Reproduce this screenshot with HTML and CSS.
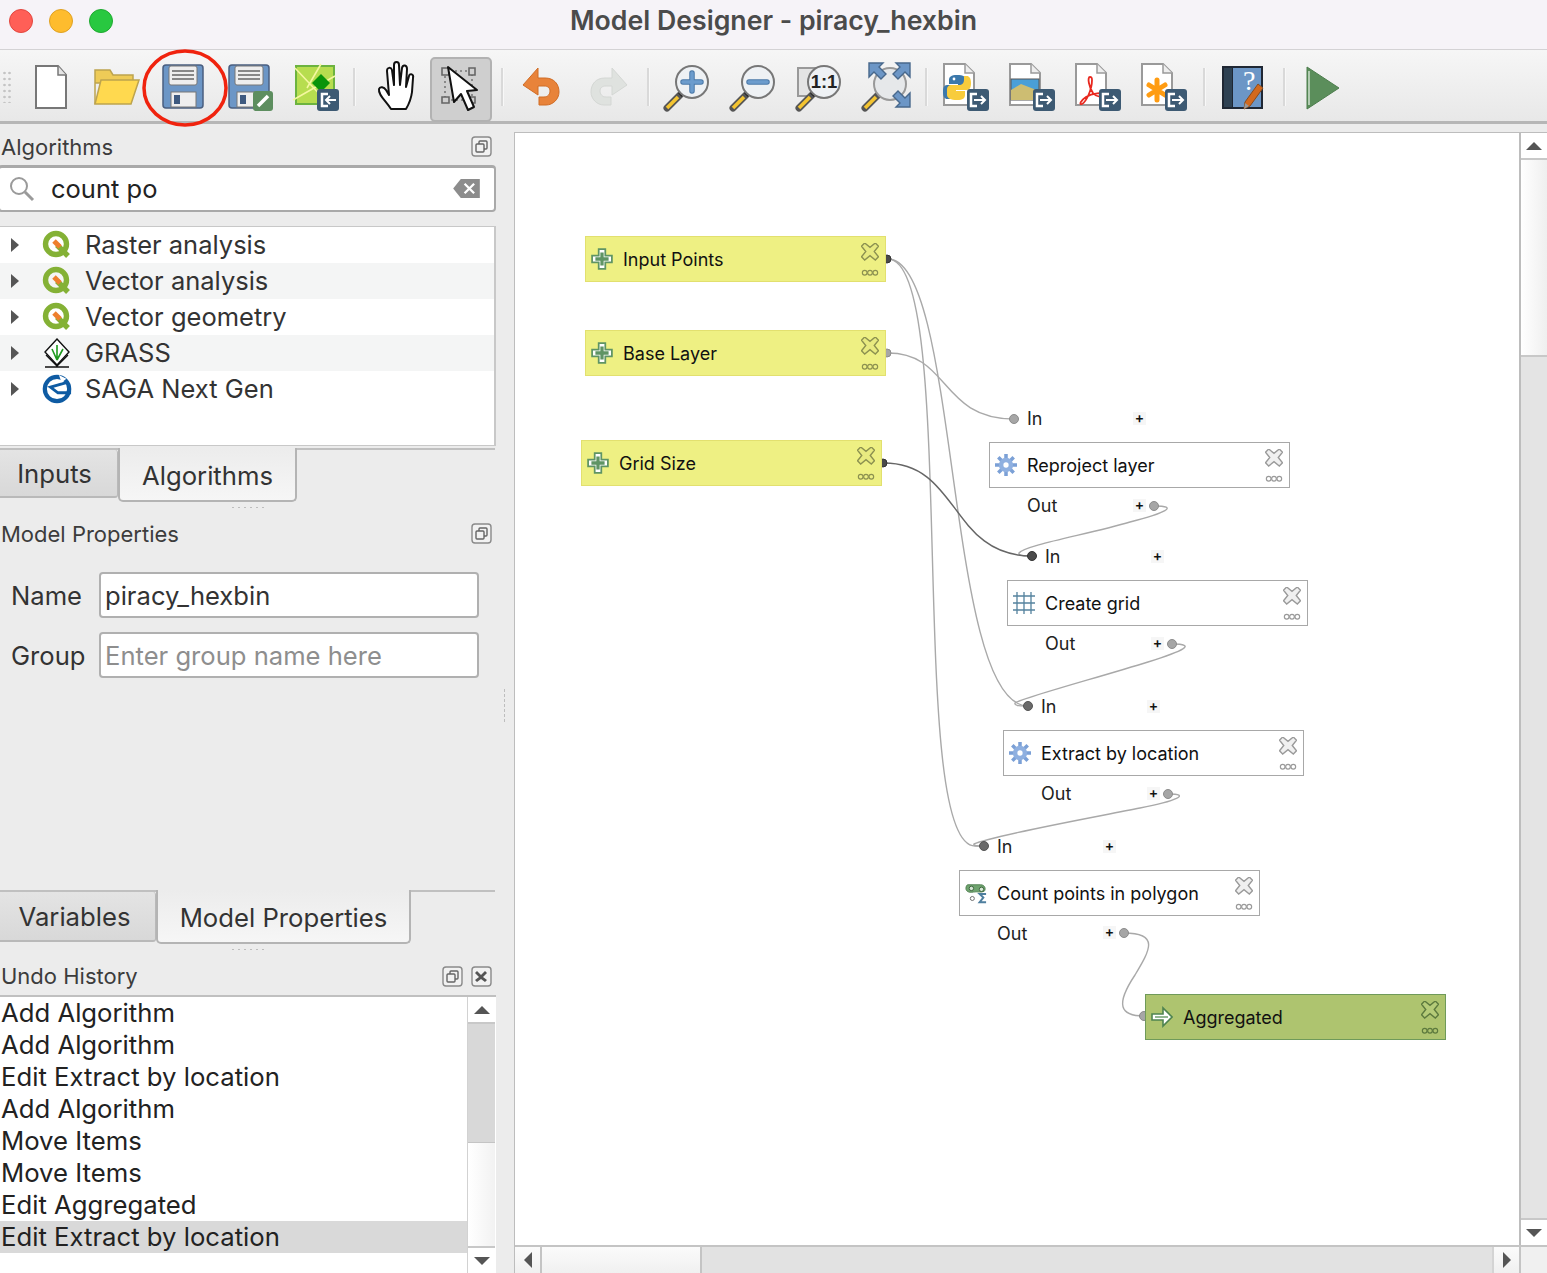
FILE: index.html
```html
<!DOCTYPE html>
<html lang="en">
<head>
  <meta charset="UTF-8">
  <title>Model Designer - piracy_hexbin</title>
  <link rel="stylesheet" href="styles.css">
</head>
<body>
  <svg class="defs" width="0" height="0">
    <defs>
      <g id="badge-in">
        <rect x="36" y="39" width="22" height="22" rx="3" fill="#3d5a73"/>
        <path d="M47 44h-6v12h6" fill="none" stroke="#fff" stroke-width="2.5"/>
        <path d="M55 50h-10M49 46l-4 4 4 4" fill="none" stroke="#fff" stroke-width="2"/>
      </g>
      <g id="badge-out">
        <rect x="34" y="39" width="22" height="22" rx="3" fill="#3d5a73"/>
        <path d="M44 44h-6v12h6" fill="none" stroke="#fff" stroke-width="2.5"/>
        <path d="M41 50h11M48 46l4 4-4 4" fill="none" stroke="#fff" stroke-width="2"/>
      </g>
      <g id="page">
        <path d="M11 14h21l9 9v32H11z" fill="#fff" stroke="#9a9a9a" stroke-width="2"/>
        <path d="M32 14v9h9" fill="#eee" stroke="#9a9a9a" stroke-width="1.5"/>
      </g>
      <g id="glass">
        <path d="M12 58l13-13" stroke="#555" stroke-width="7" stroke-linecap="round"/>
        <path d="M12 58l11-11" stroke="#f4c430" stroke-width="3.5"/>
        <path d="M25 45l2-2" stroke="#111" stroke-width="5"/>
      </g>
      <g id="float-icon">
        <rect x="1" y="1" width="19" height="19" rx="3" fill="#f2f2f2" stroke="#8a8a8a" stroke-width="1.4"/>
        <rect x="8" y="5" width="8" height="8" rx="1" fill="none" stroke="#666" stroke-width="1.4"/>
        <rect x="5" y="8" width="8" height="8" rx="1" fill="#f2f2f2" stroke="#666" stroke-width="1.4"/>
      </g>
      <g id="q-logo">
        <circle cx="14" cy="14" r="10.5" fill="none" stroke="#84b135" stroke-width="5.4"/>
        <path d="M15 15l11 11" stroke="#84b135" stroke-width="5.4"/>
        <path d="M12 11l6 6" stroke="#ee7f2d" stroke-width="5"/>
      </g>
      <g id="node-tools">
        <path d="M3 0l5 4 5-4 3 3-4 5 4 5-3 3-5-4-5 4-3-3 4-5-4-5z" fill="var(--tool-fill)" stroke="var(--tool-line)" stroke-width="1.3"/>
        <circle cx="3" cy="28" r="2.2" fill="none" stroke="var(--tool-line)" stroke-width="1.1"/>
        <circle cx="8" cy="28" r="2.2" fill="none" stroke="var(--tool-line)" stroke-width="1.1"/>
        <circle cx="13" cy="28" r="2.2" fill="none" stroke="var(--tool-line)" stroke-width="1.1"/>
      </g>
      <g id="plus-icon">
        <path d="M7 1h6v6h6v6h-6v6H7v-6H1V7h6z" fill="#fff" stroke="#5f9464" stroke-width="1.6"/>
        <path d="M10 4v12M4 10h12" stroke="#5f9464" stroke-width="3"/>
      </g>
      <g id="gear-icon">
        <path d="M10 0v20M0 10h20M3 3l14 14M17 3L3 17" stroke="#7ba0d6" stroke-width="3.2"/>
        <circle cx="10" cy="10" r="6.5" fill="#8fb0e0"/>
        <circle cx="10" cy="10" r="2.4" fill="#fff"/>
      </g>
      <g id="python-half">
        <path d="M24 25c-6 0-8 2-8 5v4h9v1H14c-3 0-4 3-4 7 0 5 2 7 4 7h3v-4c0-3 2-5 5-5h8c2 0 4-2 4-4v-6c0-3-4-5-10-5z"/>
      </g>
    </defs>
  </svg>

  <div class="titlebar">
    <div class="lights">
      <span class="light light-red"></span>
      <span class="light light-amber"></span>
      <span class="light light-green"></span>
    </div>
    <div class="title">Model Designer - piracy_hexbin</div>
  </div>

  <div class="toolbar">
    <div class="grip"></div>
    <div class="tool"><svg viewBox="0 0 66 72"><path d="M19 16h22l8 9v33H19z" fill="#fff" stroke="#777" stroke-width="2"/><path d="M41 16v9h8" fill="#e4e4e4" stroke="#777" stroke-width="1.5"/></svg></div>
    <div class="tool"><svg viewBox="0 0 66 72"><path d="M12 54V20h15l3 5h20v8H12z" fill="#eecb57" stroke="#bda44e" stroke-width="1.5"/><path d="M18 30h38l-8 24H12z" fill="#ffd94f" stroke="#bda44e" stroke-width="1.5"/></svg></div>
    <div class="tool"><svg viewBox="0 0 66 72"><rect x="14" y="15" width="40" height="43" rx="3" fill="#6c96c6" stroke="#4a5f80" stroke-width="1.5"/><rect x="20" y="16" width="28" height="19" rx="2" fill="#eee" stroke="#777"/><path d="M23 21h22M23 25h22M23 29h22" stroke="#666" stroke-width="1.5"/><rect x="22" y="42" width="25" height="15" fill="#eee" stroke="#777"/><rect x="25" y="45" width="6" height="9" fill="#3e5a80"/></svg></div>
    <div class="tool"><svg viewBox="0 0 66 72"><rect x="14" y="15" width="40" height="43" rx="3" fill="#6c96c6" stroke="#4a5f80" stroke-width="1.5"/><rect x="20" y="16" width="28" height="19" rx="2" fill="#eee" stroke="#777"/><path d="M23 21h22M23 25h22M23 29h22" stroke="#666" stroke-width="1.5"/><rect x="22" y="42" width="25" height="15" fill="#eee" stroke="#777"/><rect x="25" y="45" width="6" height="9" fill="#3e5a80"/><rect x="38" y="41" width="20" height="20" rx="3" fill="#5d8e5f"/><path d="M43 56l10-10" stroke="#fff" stroke-width="3.5"/></svg></div>
    <div class="tool"><svg viewBox="0 0 66 72"><rect x="15" y="16" width="38" height="38" fill="#b7dd4f" stroke="#6cb33f" stroke-width="2"/><path d="M14 18l30 32M12 50l42-24M40 14L26 38" stroke="#f4f7a0" stroke-width="1.6" fill="none"/><path d="M40 24l9 9-9 9-9-9z" fill="#0a940a"/><use href="#badge-in"/></svg></div>
    <div class="tool-sep tool-sep-first"></div>
    <div class="tool"><svg viewBox="0 0 66 72"><path d="M28 59C23 51 15 45 16 39c1-3 5-2 7 1l3 5-2-24c0-4 4-4 5-1l2 15 0-20c0-4 5-4 5 0l1 20 2-17c1-4 5-3 5 1l-1 18 3-11c1-3 5-2 4 2l-1 14c-1 8-3 12-6 17z" fill="#fff" stroke="#111" stroke-width="2" stroke-linejoin="round"/></svg></div>
    <div class="tool tool-active"><svg viewBox="-2 0 66 72"><rect x="14" y="21" width="27" height="29" fill="none" stroke="#777" stroke-width="1.6" stroke-dasharray="2 3"/><path d="M11 18h7v7h-7zM38 18h6v7h-6zM11 47h7v6h-7zM38 47h6v6h-6z" fill="#cfcfcf" stroke="#666" stroke-width="1.6"/><path d="M17 17L23 52L30 44L37 60L43 57L36 41L46 40z" fill="#fff" stroke="#111" stroke-width="2" stroke-linejoin="round"/></svg></div>
    <div class="tool-sep"></div>
    <div class="tool"><svg viewBox="0 0 66 72"><path d="M14 35l15-17v10h7c9 0 14 6 14 14 0 7-6 13-13 13h-7v-8h5c4 0 6-3 6-6s-2-5-6-5h-6v9z" fill="#e8833a" stroke="#d06c25" stroke-width="1"/></svg></div>
    <div class="tool"><svg viewBox="0 0 66 72"><path d="M52 35L37 18v10h-7c-9 0-14 6-14 14 0 7 6 13 13 13h7v-8h-5c-4 0-6-3-6-6s2-5 6-5h6v9z" fill="#dfe2df" stroke="#d4d7d4" stroke-width="1"/></svg></div>
    <div class="tool-sep"></div>
    <div class="tool"><svg viewBox="0 0 66 72"><use href="#glass"/><circle cx="37" cy="32" r="16" fill="#eef1f4" stroke="#777" stroke-width="2"/><path d="M37 23v18M28 32h18" stroke="#4a78a8" stroke-width="5.5" stroke-linecap="round"/><path d="M37 23v18M28 32h18" stroke="#6c9ccd" stroke-width="3.5" stroke-linecap="round"/></svg></div>
    <div class="tool"><svg viewBox="0 0 66 72"><use href="#glass"/><circle cx="37" cy="32" r="16" fill="#eef1f4" stroke="#777" stroke-width="2"/><path d="M28 32h18" stroke="#4a78a8" stroke-width="5.5" stroke-linecap="round"/><path d="M28 32h18" stroke="#6c9ccd" stroke-width="3.5" stroke-linecap="round"/></svg></div>
    <div class="tool"><svg viewBox="0 0 66 72"><rect x="11" y="18" width="26" height="28" fill="#e4e4e4" stroke="#999" stroke-width="2"/><use href="#glass"/><circle cx="37" cy="32" r="16" fill="#eef1f4" stroke="#777" stroke-width="2"/><text class="one-one" x="37" y="38">1:1</text></svg></div>
    <div class="tool"><svg viewBox="0 0 66 72"><use href="#glass"/><circle cx="37" cy="34" r="16" fill="#e6e8ea" stroke="#999" stroke-width="2"/><path d="M16 13h14l-4 4 7 7-5 5-7-7-5 5zM57 13H43l4 4-7 7 5 5 7-7 5 5zM57 57H43l4-4-7-7 5-5 7 7 5-5z" fill="#6c96c6" stroke="#48688c" stroke-width="1.4"/></svg></div>
    <div class="tool-sep"></div>
    <div class="tool"><svg viewBox="0 0 66 72"><use href="#page"/><use href="#python-half" fill="#3b78ab"/><use href="#python-half" fill="#f8cc3c" transform="rotate(180 24 37.5)"/><circle cx="21" cy="29" r="1.4" fill="#fff"/><use href="#badge-out"/></svg></div>
    <div class="tool"><svg viewBox="0 0 66 72"><use href="#page"/><rect x="12" y="29" width="28" height="21" fill="#4a9fd8" stroke="#555"/><path d="M12 50V40l10-6 18 7v9z" fill="#cdbd72"/><use href="#badge-out"/></svg></div>
    <div class="tool"><svg viewBox="0 0 66 72"><use href="#page"/><path d="M25 27c-3 0-1 10 3 16 3 4 11 5 11 2s-12-2-18 2c-6 4-7 8-4 7 4-2 10-14 10-24 0-2 0-3-2-3z" fill="none" stroke="#e8281f" stroke-width="1.8"/><use href="#badge-out"/></svg></div>
    <div class="tool"><svg viewBox="0 0 66 72"><use href="#page"/><path d="M26 30v20M18 35l16 10M18 45l16-10" stroke="#ff9c12" stroke-width="5" stroke-linecap="round"/><use href="#badge-out"/></svg></div>
    <div class="tool-sep"></div>
    <div class="tool"><svg viewBox="0 0 66 72"><rect x="11" y="16" width="41" height="43" fill="#1f2733"/><rect x="13" y="18" width="8" height="39" fill="#2e4152"/><rect x="22" y="18" width="28" height="39" fill="#6c96c6"/><text class="help-mark" x="32" y="40">?</text><path d="M47 34l5 4-13 18-6 3 1-7z" fill="#d2691e" stroke="#8a4b1c" stroke-width="1"/><path d="M33 59l1-6 4 3z" fill="#999"/></svg></div>
    <div class="tool-sep"></div>
    <div class="tool"><svg viewBox="0 0 66 72"><path d="M16 17l32 21-32 21z" fill="#5b8e5b" stroke="#4d7d4d"/><path d="M18 21v34" stroke="#cfe0cf" stroke-width="1.5"/></svg></div>
  </div>

  <svg class="callout" width="90" height="82" viewBox="0 0 90 82">
    <ellipse cx="45" cy="41" rx="41" ry="37" fill="none" stroke="#f0230e" stroke-width="3.5"/>
  </svg>

  <div class="main">
    <div class="sidebar">
      <div class="dock-title">
        <span>Algorithms</span>
        <svg class="dock-btn" viewBox="0 0 21 21"><use href="#float-icon"/></svg>
      </div>
      <div class="search">
        <svg class="search-icon" viewBox="0 0 26 26"><circle cx="10" cy="10" r="8" fill="none" stroke="#9a9a9a" stroke-width="2"/><path d="M16 16l8 8" stroke="#9a9a9a" stroke-width="3"/></svg>
        <span class="search-text">count po</span>
        <svg class="search-clear" viewBox="0 0 28 21"><path d="M8 0h20v20H8L0 10z" fill="#8c8c8c"/><path d="M12 5l10 10M22 5L12 15" stroke="#fff" stroke-width="2.4"/></svg>
      </div>
      <div class="tree">
        <div class="tree-row"><span class="caret"></span><svg class="tree-icon" viewBox="0 0 30 30"><use href="#q-logo"/></svg>Raster analysis</div>
        <div class="tree-row alt"><span class="caret"></span><svg class="tree-icon" viewBox="0 0 30 30"><use href="#q-logo"/></svg>Vector analysis</div>
        <div class="tree-row"><span class="caret"></span><svg class="tree-icon" viewBox="0 0 30 30"><use href="#q-logo"/></svg>Vector geometry</div>
        <div class="tree-row alt"><span class="caret"></span><svg class="tree-icon" viewBox="0 0 30 30"><path d="M15 1l12 13-12 13L3 14z" fill="#fff" stroke="#111" stroke-width="1.4"/><path d="M15 22V7M15 22l-5-11M15 22l6-11" stroke="#1f9a1f" stroke-width="1.6"/><path d="M4 17l11 11 11-11M3 29h24" fill="none" stroke="#111" stroke-width="1.3"/></svg>GRASS</div>
        <div class="tree-row"><span class="caret"></span><svg class="tree-icon" viewBox="0 0 32 32"><circle cx="16" cy="16" r="13" fill="none" stroke="#0e5ba3" stroke-width="4.5"/><path d="M27 9L9 14l8 6h14" fill="none" stroke="#0e5ba3" stroke-width="3"/><path d="M18 1l8 4-5 4z" fill="#fff"/></svg>SAGA Next Gen</div>
      </div>
      <div class="tabs tabs-top">
        <div class="tab tab-inputs">Inputs</div>
        <div class="tab tab-on tab-algos">Algorithms</div>
      </div>
      <div class="dots"></div>
      <div class="dock-title">
        <span>Model Properties</span>
        <svg class="dock-btn" viewBox="0 0 21 21"><use href="#float-icon"/></svg>
      </div>
      <div class="form">
        <div class="form-row"><label>Name</label><div class="field">piracy_hexbin</div></div>
        <div class="form-row"><label>Group</label><div class="field field-empty">Enter group name here</div></div>
      </div>
      <div class="tabs tabs-mid">
        <div class="tab tab-vars">Variables</div>
        <div class="tab tab-on tab-props">Model Properties</div>
      </div>
      <div class="dots"></div>
      <div class="dock-title title-undo">
        <span>Undo History</span>
        <svg class="dock-btn" viewBox="0 0 21 21"><use href="#float-icon"/></svg>
        <svg class="dock-btn" viewBox="0 0 21 21"><rect x="1" y="1" width="19" height="19" rx="3" fill="#f2f2f2" stroke="#8a8a8a" stroke-width="1.4"/><path d="M6 5l4 4 4-4 2 2-4 4 4 3-2 2-4-3-4 3-2-2 4-3-4-4z" fill="#555"/></svg>
      </div>
      <div class="history">
        <div class="history-list">
          <div class="history-row">Add Algorithm</div>
          <div class="history-row">Add Algorithm</div>
          <div class="history-row">Edit Extract by location</div>
          <div class="history-row">Add Algorithm</div>
          <div class="history-row">Move Items</div>
          <div class="history-row">Move Items</div>
          <div class="history-row">Edit Aggregated</div>
          <div class="history-row selected">Edit Extract by location</div>
        </div>
        <div class="vbar vbar-history">
          <div class="arrow-btn"><span class="tri tri-up"></span></div>
          <div class="vthumb"></div>
          <div class="vrest"></div>
          <div class="arrow-btn arrow-end"><span class="tri tri-down"></span></div>
        </div>
      </div>
    </div>

    <div class="vgrip"></div>

    <div class="canvas-wrap">
      <div class="canvas-row">
        <div class="canvas">
          <svg class="wires" viewBox="514 132 1005 1113">
            <g fill="none" stroke="#a9a9a9" stroke-width="1.4">
              <path d="M888 259C960 259 905 846 975 846L984 846"/>
              <path d="M888 259C960 259 945 706 1028 706"/>
              <path d="M888 353C950 353 940 419 1014 419"/>
              <path d="M1154 506C1180 506 1165 513 1130 522C1090 534 1025 545 1019 553C1018 556 1026 556 1032 556"/>
              <path d="M1172 644C1198 644 1183 651 1148 662C1100 677 1022 698 1015 703C1014 706 1022 706 1028 706"/>
              <path d="M1168 794C1192 794 1176 801 1140 808C1090 818 990 836 974 844C973 846 978 846 984 846"/>
              <path d="M1124 933C1160 933 1150 950 1135 975C1115 1005 1120 1016 1144 1016"/>
            </g>
            <path d="M884 463C960 463 950 556 1032 556" fill="none" stroke="#666" stroke-width="1.5"/>
            <g class="port">
              <circle cx="1014" cy="419" r="4.5"/><circle cx="1154" cy="506" r="4.5"/><circle cx="1172" cy="644" r="4.5"/>
              <circle cx="1168" cy="794" r="4.5"/><circle cx="1124" cy="933" r="4.5"/><circle cx="1144" cy="1016" r="4.5"/>
              <circle cx="887" cy="353" r="4"/>
            </g>
            <g class="port port-dark">
              <circle cx="887" cy="259" r="4"/><circle cx="883" cy="463" r="4"/>
              <circle cx="1032" cy="556" r="4.5"/>
            </g>
            <g class="port port-mid">
              <circle cx="1028" cy="706" r="4.5"/><circle cx="984" cy="846" r="4.5"/>
            </g>
          </svg>

          <div class="node node-input node-a">
            <svg class="node-icon" viewBox="0 0 20 20"><use href="#plus-icon"/></svg><span>Input Points</span>
            <svg class="node-tools" viewBox="0 0 16 32"><use href="#node-tools"/></svg>
          </div>
          <div class="node node-input node-b">
            <svg class="node-icon" viewBox="0 0 20 20"><use href="#plus-icon"/></svg><span>Base Layer</span>
            <svg class="node-tools" viewBox="0 0 16 32"><use href="#node-tools"/></svg>
          </div>
          <div class="node node-input node-c">
            <svg class="node-icon" viewBox="0 0 20 20"><use href="#plus-icon"/></svg><span>Grid Size</span>
            <svg class="node-tools" viewBox="0 0 16 32"><use href="#node-tools"/></svg>
          </div>

          <div class="node node-d">
            <svg class="node-icon" viewBox="0 0 20 20"><use href="#gear-icon"/></svg><span>Reproject layer</span>
            <svg class="node-tools" viewBox="0 0 16 32"><use href="#node-tools"/></svg>
          </div>
          <div class="node node-e">
            <svg class="node-icon" viewBox="0 0 22 22"><path d="M4 0v22M11 0v22M18 0v22M0 4h22M0 11h22M0 18h22" fill="none" stroke="#55839e" stroke-width="1.3"/></svg><span>Create grid</span>
            <svg class="node-tools" viewBox="0 0 16 32"><use href="#node-tools"/></svg>
          </div>
          <div class="node node-f">
            <svg class="node-icon" viewBox="0 0 20 20"><use href="#gear-icon"/></svg><span>Extract by location</span>
            <svg class="node-tools" viewBox="0 0 16 32"><use href="#node-tools"/></svg>
          </div>
          <div class="node node-g">
            <svg class="node-icon" viewBox="0 0 24 22"><path d="M3 2h14c5 0 6 5 4 7-3 2-8 0-12 1-5 1-8-1-8-4 0-2 1-4 2-4z" fill="#6ea36e" stroke="#4f7f4f"/><circle cx="7" cy="6" r="2.4" fill="#d8e8d8" stroke="#3a5f3a"/><circle cx="18" cy="7" r="2.4" fill="#d8e8d8" stroke="#3a5f3a"/><circle cx="8" cy="17" r="2.2" fill="#fff" stroke="#666"/><path d="M23 12h-7l4 4-4 5h7" fill="none" stroke="#4f7f9f" stroke-width="2.2"/></svg><span>Count points in polygon</span>
            <svg class="node-tools" viewBox="0 0 16 32"><use href="#node-tools"/></svg>
          </div>
          <div class="node node-output node-h">
            <svg class="node-icon" viewBox="0 0 22 20"><path d="M1 7h11V1l9 9-9 9v-6H1z" fill="#fff" stroke="#4f8450" stroke-width="1.6"/><path d="M4 10h13" stroke="#6f9f6f" stroke-width="1.5"/></svg><span>Aggregated</span>
            <svg class="node-tools" viewBox="0 0 16 32"><use href="#node-tools"/></svg>
          </div>

          <div class="pin pin-label in-d">In</div>
          <div class="pin pin-plus plus-in-d">+</div>
          <div class="pin pin-label out-d">Out</div>
          <div class="pin pin-plus plus-out-d">+</div>
          <div class="pin pin-label in-e">In</div>
          <div class="pin pin-plus plus-in-e">+</div>
          <div class="pin pin-label out-e">Out</div>
          <div class="pin pin-plus plus-out-e">+</div>
          <div class="pin pin-label in-f">In</div>
          <div class="pin pin-plus plus-in-f">+</div>
          <div class="pin pin-label out-f">Out</div>
          <div class="pin pin-plus plus-out-f">+</div>
          <div class="pin pin-label in-g">In</div>
          <div class="pin pin-plus plus-in-g">+</div>
          <div class="pin pin-label out-g">Out</div>
          <div class="pin pin-plus plus-out-g">+</div>
        </div>
        <div class="vbar vbar-canvas">
          <div class="arrow-btn"><span class="tri tri-up"></span></div>
          <div class="vthumb"></div>
          <div class="vrest"></div>
          <div class="arrow-btn arrow-end"><span class="tri tri-down"></span></div>
        </div>
      </div>
      <div class="hbar">
        <div class="harrow"><span class="tri tri-left"></span></div>
        <div class="hthumb"></div>
        <div class="hrest"></div>
        <div class="harrow harrow-end"><span class="tri tri-right"></span></div>
        <div class="hcorner"></div>
      </div>
    </div>
  </div>
</body>
</html>
```

FILE: styles.css
```css
:root {
  --panel: #ececec;
  --line: #b4b4b4;
  --text: #2b2b2b;
}
* { box-sizing: border-box; }
html, body { height: 100%; }
body {
  margin: 0;
  height: 1273px;
  overflow: hidden;
  background: var(--panel);
  color: var(--text);
  font-family: Inter, "Noto Sans", sans-serif;
  position: relative;
}
.defs { position: absolute; }

.titlebar {
  height: 50px;
  background: #f6f3f8;
  border-bottom: 1px solid #d4d2d5;
  display: flex;
  align-items: center;
  position: relative;
}
.lights {
  display: flex;
  gap: 16px;
  padding-left: 9px;
  margin-top: -8px;
}
.light {
  width: 24px;
  height: 24px;
  border-radius: 50%;
}
.light-red { background: #ff5f57; border: 1px solid #e2463f; }
.light-amber { background: #febc2e; border: 1px solid #dfa123; }
.light-green { background: #28c840; border: 1px solid #1fa930; }
.title {
  flex: 1;
  text-align: center;
  font-size: 26.7px;
  font-weight: 600;
  color: #4b4b4b;
  margin-left: -113px;
  margin-top: -9px;
}

.toolbar {
  height: 74px;
  display: flex;
  background: linear-gradient(#f6f6f6, #e8e8e8);
  border-bottom: 3px solid #b6b6b6;
}
.grip {
  width: 17px;
  margin: 20px 0 18px;
  padding-left: 2px;
  background-image: radial-gradient(#c4c4c4 1px, transparent 1.3px);
  background-size: 5px 6px;
  background-origin: content-box;
  background-clip: content-box;
  border-right: 6px solid transparent;
}
.tool {
  width: 66px;
  height: 72px;
}
.tool svg { display: block; width: 66px; height: 72px; overflow: visible; }
.tool-active { position: relative; }
.tool-active::before {
  content: "";
  position: absolute;
  left: 1px;
  right: 3px;
  top: 7px;
  height: 61px;
  background: #cfcfcf;
  border: 2px solid #b2b2b2;
  border-radius: 5px;
}
.tool-active svg { position: relative; }
.tool-sep {
  width: 14px;
  position: relative;
}
.tool-sep-first { width: 16px; }
.tool-sep::after {
  content: "";
  position: absolute;
  left: 6px;
  top: 18px;
  height: 38px;
  width: 2px;
  background: #d9d9d9;
  box-shadow: 1px 0 0 #f8f8f8;
}
.one-one {
  font-family: "Liberation Sans", sans-serif;
  font-size: 18.5px;
  font-weight: 700;
  fill: #222;
  text-anchor: middle;
}
.help-mark {
  font-family: "Liberation Serif", serif;
  font-size: 28px;
  fill: #fff;
}
.callout {
  position: absolute;
  left: 140px;
  top: 47px;
}

.main {
  display: flex;
  height: 1149px;
}
.sidebar {
  width: 496px;
  flex: none;
}
.dock-title {
  height: 41px;
  padding: 4px 4px 0 1px;
  display: flex;
  align-items: center;
  gap: 8px;
  font-size: 22px;
  color: #3c3c3c;
}
.dock-title span { flex: 1; }
.dock-btn { width: 21px; height: 21px; flex: none; }
.search {
  height: 47px;
  margin-left: -2px;
  background: #fff;
  border: 2px solid #a9a9a9;
  border-top-width: 3px;
  border-radius: 4px;
  display: flex;
  align-items: center;
  padding: 0 14px 0 9px;
}
.search-icon { width: 26px; height: 26px; }
.search-text {
  flex: 1;
  font-size: 25.5px;
  color: #222;
  padding: 0 0 2px 16px;
}
.search-clear { width: 27px; height: 20px; }
.tree {
  margin-top: 14px;
  height: 220px;
  background: #fff;
  border: 1px solid #c8c8c8;
  border-left: 0;
  border-right-width: 2px;
}
.tree-row {
  height: 36px;
  padding-bottom: 2px;
  display: flex;
  align-items: center;
  font-size: 25.5px;
  color: #333;
}
.tree-row.alt { background: #f4f5f5; }
.caret {
  width: 0;
  height: 0;
  margin: 2px 0 0 11px;
  border-left: 8px solid #555;
  border-top: 7.5px solid transparent;
  border-bottom: 7.5px solid transparent;
}
.tree-icon {
  width: 30px;
  height: 30px;
  margin: 2px 13px 0 23px;
  flex: none;
}

.tabs {
  display: flex;
  border-top: 2px solid #c0c0c0;
  align-items: flex-start;
  font-size: 25.7px;
}
.tab {
  text-align: center;
  color: #333;
}
.tab-inputs, .tab-vars {
  background: linear-gradient(#e4e4e4, #d8d8d8);
  border-right: 1px solid #b9b9b9;
  border-bottom: 2px solid #b9b9b9;
  border-radius: 0 3px 3px 0;
  height: 48px;
  line-height: 48px;
  padding-right: 8px;
}
.tab-on {
  background: linear-gradient(#ececec, #f6f6f6);
  border: 2px solid #b4b4b4;
  border-top: 0;
  border-radius: 0 0 5px 5px;
  line-height: 52px;
  margin-top: -2px;
  padding-top: 2px;
  height: 54px;
}
.tabs-top { margin-top: 2px; width: 495px; height: 50px; }
.tab-inputs { width: 118px; }
.tab-algos { width: 179px; }
.tabs-mid { width: 495px; height: 50px; }
.tab-vars { width: 156px; height: 50px; line-height: 50px; padding-right: 6px; }
.tab-props { width: 255px; }
.dots {
  height: 10px;
  margin-top: 3px;
  background-image: radial-gradient(#bdbdbd 0.8px, transparent 1px);
  background-size: 6px 3px;
  background-repeat: repeat-x;
  background-position: 230px 5px;
  background-clip: content-box;
  padding: 0 232px 0 230px;
}
.form {
  height: 338px;
  padding-top: 20px;
  display: flex;
  flex-direction: column;
  gap: 14px;
}
.form-row {
  display: flex;
  align-items: center;
  font-size: 25.6px;
  color: #333;
}
.form-row label { width: 99px; padding-left: 11px; }
.field {
  width: 380px;
  height: 46px;
  line-height: 43px;
  background: #fff;
  border: 2px solid #b0b0b0;
  border-radius: 4px;
  padding-left: 4px;
  color: #333;
}
.field-empty { color: #8e8e8e; }
.title-undo { height: 38px; padding-top: 0; margin-top: 4px; }
.history {
  height: 278px;
  display: flex;
  background: #fff;
  border-top: 2px solid #c0c0c0;
  overflow: hidden;
}
.history-list { width: 467px; flex: none; padding-top: 0; }
.history-row {
  height: 32px;
  line-height: 32px;
  font-size: 25.7px;
  padding-left: 1px;
  color: #222;
  white-space: nowrap;
}
.history-row.selected { background: #d9d9d9; }

.vbar {
  width: 28px;
  display: flex;
  flex-direction: column;
  background: #fff;
  border-left: 1px solid #d2d2d2;
}
.arrow-btn {
  height: 27px;
  display: flex;
  align-items: center;
  justify-content: center;
  background: #fff;
  border-bottom: 2px solid #c8c8c8;
  flex: none;
}
.arrow-end { border-bottom: 0; border-top: 2px solid #c8c8c8; }
.vthumb { background: #d8d8d8; border-bottom: 1px solid #c4c4c4; }
.vbar-history .vthumb { height: 119px; }
.vrest { flex: 1; background: linear-gradient(90deg, #fff, #f2f2f2); }
.vbar-canvas {
  border-left: 2px solid #bdbdbd;
}
.vbar-canvas .vthumb {
  height: 197px;
  background: linear-gradient(90deg, #fff, #efefef);
  border-bottom: 2px solid #c8c8c8;
}
.vbar-canvas .vrest { background: #e4e4e4; }
.tri { width: 0; height: 0; display: block; }
.tri-up { border: 8px solid transparent; border-top: 0; border-bottom: 8px solid #555; }
.tri-down { border: 8px solid transparent; border-bottom: 0; border-top: 8px solid #555; }
.tri-left { border: 8px solid transparent; border-left: 0; border-right: 8px solid #555; }
.tri-right { border: 8px solid transparent; border-right: 0; border-left: 8px solid #555; }

.vgrip {
  width: 18px;
  flex: none;
  margin: 564px 0 551px;
  background-image: radial-gradient(#bdbdbd 0.8px, transparent 1px);
  background-size: 3px 5px;
  background-repeat: repeat-y;
  background-position: 7px 0;
}
.canvas-wrap {
  flex: 1;
  margin-top: 8px;
  display: flex;
  flex-direction: column;
  border: 1px solid #bdbdbd;
  border-right: 0;
  border-bottom: 0;
  min-width: 0;
}
.canvas-row {
  flex: 1;
  display: flex;
  min-height: 0;
}
.canvas {
  flex: 1;
  position: relative;
  background: #fff;
  overflow: hidden;
}
.wires {
  position: absolute;
  left: -1px;
  top: -1px;
  width: 1005px;
  height: 1113px;
}
.port circle { fill: #a6a6a6; stroke: #8c8c8c; stroke-width: 1; }
.port-dark circle { fill: #4a4a4a; stroke: #333; }
.port-mid circle { fill: #6a6a6a; stroke: #555; }

.node {
  position: absolute;
  width: 301px;
  height: 46px;
  background: #fff;
  border: 1px solid #a8a8a8;
  display: flex;
  align-items: center;
  font-size: 18px;
  color: #111;
  --tool-fill: #f0f0f0;
  --tool-line: #9a9a9a;
}
.node-icon {
  width: 22px;
  height: 22px;
  margin: 0 10px 0 5px;
  flex: none;
}
.node-tools {
  position: absolute;
  right: 6px;
  top: 6px;
  width: 18px;
  height: 34px;
}
.node-input {
  background: #eef083;
  border-color: #e2e06f;
  --tool-fill: #e8ea80;
  --tool-line: #8c9150;
}
.node-output {
  background: #aec46f;
  border-color: #6f9a5a;
  --tool-fill: #b5cb78;
  --tool-line: #5d7a3e;
}
.node-a { left: 70px; top: 103px; }
.node-b { left: 70px; top: 197px; }
.node-c { left: 66px; top: 307px; }
.node-d { left: 474px; top: 309px; }
.node-e { left: 492px; top: 447px; }
.node-f { left: 488px; top: 597px; }
.node-g { left: 444px; top: 737px; }
.node-h { left: 630px; top: 861px; }

.pin { position: absolute; }
.pin-label { font-size: 18px; color: #222; line-height: 22px; }
.pin-plus {
  width: 13px;
  height: 13px;
  line-height: 12px;
  text-align: center;
  background: #f6f6f6;
  font-size: 14px;
  font-weight: 600;
  color: #111;
}
.in-d { left: 512px; top: 275px; }
.plus-in-d { left: 618px; top: 279px; }
.out-d { left: 512px; top: 362px; }
.plus-out-d { left: 618px; top: 366px; }
.in-e { left: 530px; top: 413px; }
.plus-in-e { left: 636px; top: 417px; }
.out-e { left: 530px; top: 500px; }
.plus-out-e { left: 636px; top: 504px; }
.in-f { left: 526px; top: 563px; }
.plus-in-f { left: 632px; top: 567px; }
.out-f { left: 526px; top: 650px; }
.plus-out-f { left: 632px; top: 654px; }
.in-g { left: 482px; top: 703px; }
.plus-in-g { left: 588px; top: 707px; }
.out-g { left: 482px; top: 790px; }
.plus-out-g { left: 588px; top: 793px; }

.hbar {
  height: 28px;
  flex: none;
  display: flex;
  background: #fff;
  border-top: 2px solid #c4c4c4;
}
.harrow {
  width: 27px;
  display: flex;
  align-items: center;
  justify-content: center;
  border-right: 2px solid #c4c4c4;
  background: linear-gradient(#fbfbfb, #f0f0f0);
}
.harrow-end { border-right: 0; border-left: 2px solid #d4d4d4; }
.hthumb { width: 160px; background: linear-gradient(#fbfbfb, #f0f0f0); border-right: 2px solid #c4c4c4; }
.hrest { flex: 1; background: #e2e2e2; }
.hcorner { width: 28px; background: #f0f0f0; border-left: 2px solid #c4c4c4; }
```
